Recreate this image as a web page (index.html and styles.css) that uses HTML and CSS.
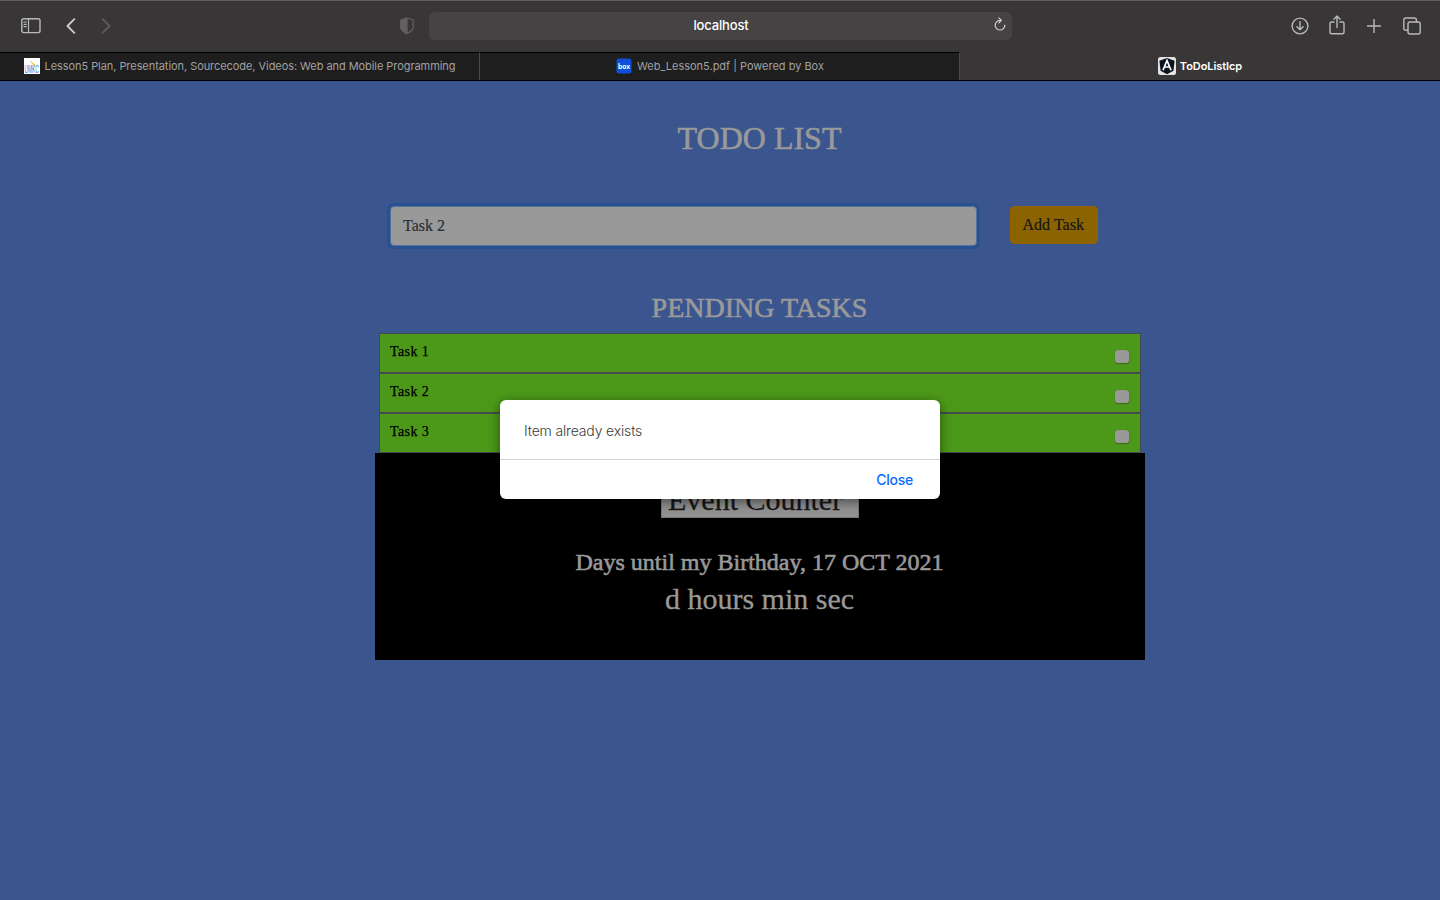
FILE: index.html
```html
<!DOCTYPE html>
<html lang="en">
<head>
<meta charset="utf-8">
<title>ToDoListIcp</title>
<link rel="stylesheet" href="styles.css">
</head>
<body>
<header class="toolbar">
  <div class="nav">
    <svg class="sidebar-icon" width="20" height="16" viewBox="0 0 20 16"><rect x=".8" y=".8" width="18.2" height="13.8" rx="1.8"/><path d="M7.5 1v13.5M3 4h2.3M3 6.3h2.3M3 8.6h2.3"/></svg>
    <svg class="back-icon" width="10" height="16" viewBox="0 0 10 16"><path d="M8.3 1.2 1.5 8l6.8 6.8"/></svg>
    <svg class="forward-icon" width="10" height="16" viewBox="0 0 10 16"><path d="M1.7 1.2 8.500 8l-6.800 6.800"/></svg>
  </div>
  <svg class="shield-icon" width="14" height="18" viewBox="0 0 14 18"><path class="outline" d="M7 1 13.200 3v7c0 3-3 5-6.200 6.600C3.800 15 .8 13 .8 10V3z"/><path class="half" d="M7 1v15.600C3.800 15 .8 13 .8 10V3z"/></svg>
  <div class="address">
    <span>localhost</span>
    <svg class="reload-icon" width="12" height="14" viewBox="0 0 12 14"><path d="M6.800 3.400H6A4.800 4.800 0 1 0 10.800 8.200M4.900.9l2.500 2.500-2.500 2.500"/></svg>
  </div>
  <div class="actions">
    <svg width="18" height="18" viewBox="0 0 18 18"><circle cx="9" cy="9" r="7.900"/><path d="M9 4.700v8M5.900 9.700 9 12.800l3.100-3.100"/></svg>
    <svg width="16" height="20" viewBox="0 0 16 20"><path d="M5 7H2.500Q1 7 1 8.500v8.700q0 1.500 1.500 1.500h11q1.500 0 1.500-1.500V8.500Q15 7 13.500 7H11M8 12.500V1.200M4.900 4.200 8 1.100l3.100 3.100"/></svg>
    <svg width="14" height="14" viewBox="0 0 14 14"><path d="M7 .5v13M.5 7h13"/></svg>
    <svg width="18" height="18" viewBox="0 0 18 18"><rect x="5" y="5" width="12.200" height="12" rx="2"/><path d="M5 13.200H2.800Q.8 13.200.8 11.200V3Q.8 1 2.800 1h8.600q2 0 2 2v2"/></svg>
  </div>
</header>
<nav class="tabs">
  <div class="tab">
    <svg width="16" height="16" viewBox="0 0 16 16"><rect width="16" height="16" fill="#fff"/><path d="m6 2 5 5v2L7.500 5z" fill="#f2c400"/><text transform="translate(.6 14.800) scale(.44 1)" class="umkc">UMKC</text></svg>
    <span class="tab-one">Lesson5 Plan, Presentation, Sourcecode, Videos: Web and Mobile Programming</span>
  </div>
  <div class="tab">
    <svg width="16" height="16" viewBox="0 0 16 16"><rect x=".5" y=".5" width="15" height="15" rx="2.500" fill="#0d4fd8"/><text x="2" y="10.500" textLength="12" lengthAdjust="spacingAndGlyphs" class="box">box</text></svg>
    <span class="tab-two">Web_Lesson5.pdf | Powered by Box</span>
  </div>
  <div class="tab active">
    <svg width="18" height="18" viewBox="0 0 18 18"><rect width="18" height="18" rx="2.500" fill="#e4e4e4"/><path d="m9 1 7.600 2.700-1.200 10L9 17.200l-6.400-3.500-1.200-10z" fill="#0b1220"/><path d="m5 13.300 4-9.800 4 9.800M6.600 10h4.800" fill="none" stroke="#fff" stroke-width="1.700"/></svg>
    <span class="tab-three">ToDoListIcp</span>
  </div>
</nav>
<main class="page">
  <section class="content">
    <h1 class="title">TODO LIST</h1>
    <form class="task-form">
      <input class="task-input" type="text" value="Task 2" aria-label="Task">
      <button class="add" type="button">Add Task</button>
    </form>
    <h2 class="pending">PENDING TASKS</h2>
    <ul class="tasks">
      <li><span>Task 1</span><i class="check"></i></li>
      <li><span>Task 2</span><i class="check"></i></li>
      <li><span>Task 3</span><i class="check"></i></li>
    </ul>
    <section class="counter">
      <div class="event">Event Counter</div>
      <h3 class="birthday">Days until my Birthday, 17 OCT 2021</h3>
      <p class="remaining">d hours min sec</p>
    </section>
  </section>
</main>
<div class="dialog" role="dialog">
  <p class="message">Item already exists</p>
  <div class="dialog-actions"><button class="close" type="button">Close</button></div>
</div>
</body>
</html>
```
FILE: styles.css
```css
* { box-sizing: border-box; }
body { margin: 0; height: 900px; overflow: hidden; background: #3b558f; font-family: "Liberation Serif", serif; }
h1, h2, h3, p, ul { margin: 0; padding: 0; font-weight: 400; }
svg { display: block; flex: none; }

.toolbar { height: 52px; padding-bottom: 2px; display: grid; grid-template-columns: 400px 29px 583px 1fr; align-items: center; background: #393637; border-top: 1px solid #5e5c5d; }
.toolbar svg { fill: none; stroke: #b9b8b8; stroke-width: 1.4; stroke-linecap: round; stroke-linejoin: round; }
.nav { display: flex; align-items: center; padding-left: 21px; }
.toolbar .back-icon { margin-left: 25px; stroke: #d0cfcf; stroke-width: 1.8; }
.toolbar .forward-icon { margin-left: 25px; stroke: #5e5c5d; stroke-width: 1.8; }
.toolbar .sidebar-icon path { stroke-width: 1.2; }
.toolbar .shield-icon { stroke: #626061; stroke-width: 1.2; }
.toolbar .shield-icon .half { fill: #626061; }
.address { height: 28px; border-radius: 6px; background: #464344; position: relative; display: flex; align-items: center; justify-content: center; padding: 0 0 2px 1px; color: #fff; font: 500 13px Inter, sans-serif; letter-spacing: -.15px; margin-top: 1px; }
.toolbar .reload-icon { position: absolute; right: 6px; top: 5px; stroke: #d0cfcf; stroke-width: 1.2; }
.actions { display: flex; align-items: center; padding-left: 279px; }
.actions svg + svg { margin-left: 20px; }
.actions svg:nth-child(2) { margin-top: -2px; }
.actions svg:nth-child(3) { margin-left: 22px; }
.actions svg:nth-child(4) { margin-left: 22px; }

.tabs { height: 29px; display: grid; grid-template-columns: repeat(3, 480px); background: #393637; border-bottom: 1px solid #000; }
.tab { display: flex; align-items: center; justify-content: center; gap: 5px; padding-bottom: 1px; background: #1e1e1e; border-top: 1px solid #000; border-right: 1px solid #4a4849; color: #a1a1a1; font: 400 11px Inter, sans-serif; white-space: nowrap; }
.tab.active { background: #393637; border-color: transparent; color: #fff; font-weight: 600; gap: 4px; padding-left: 1px; letter-spacing: -.07px; }
.tab-one { letter-spacing: -.06px; }
.tab-two { letter-spacing: -.01px; }
.tab:nth-child(2) { padding-left: 1px; }
.umkc { font: 400 11px "Liberation Sans", sans-serif; fill: #3478d4; }
.box { font: 700 7px Inter, sans-serif; fill: #fff; }

.page { padding-left: 375px; }
.content { width: 770px; display: flex; flex-direction: column; color: #999; }
.title { margin-top: 38px; padding-right: 1px; text-align: center; font-size: 32px; line-height: 38px; -webkit-text-stroke: .6px #999; }
.task-form { display: flex; align-items: flex-start; gap: 33px; margin-top: 49px; padding-left: 15px; }
.task-input { width: 587px; height: 40px; padding: 0 12px; border: 1px solid #4d7399; border-radius: 4px; outline: none; background: #999; color: #2c3035; font: 16px "Liberation Serif", serif; -webkit-text-stroke: .2px #2c3035; box-shadow: 0 0 0 3px #2b5092; }
.add { width: 87.500px; height: 38px; padding: 0 1px 0 0; border: 1px solid #926300; border-radius: 4px; background: #8b6300; color: #141619; font: 16px "Liberation Serif", serif; letter-spacing: .05px; -webkit-text-stroke: .2px #141619; }
.pending { margin-top: 45px; padding-right: 1px; text-align: center; font-size: 28px; line-height: 34px; -webkit-text-stroke: .6px #999; }
.tasks { margin: 8px 4px 0; list-style: none; }
.tasks li { height: 40px; display: flex; justify-content: space-between; padding: 9px 11px 0 10px; background: #4c9919; border: 1px solid #464a50; color: #000; font-size: 14px; line-height: 17px; letter-spacing: .4px; -webkit-text-stroke: .25px #000; }
.check { width: 14px; height: 13px; margin-top: 7px; border-radius: 3px; background: #999; box-shadow: 0 0 1px #355f20, 0 1px 1px #396b21; }
.counter { height: 207px; padding-top: 26px; display: flex; flex-direction: column; align-items: center; background: #000; }
.event { width: 198px; height: 39px; padding-left: 6px; border: 1px solid #777; background: #939393; color: #181818; font-size: 30px; line-height: 39px; -webkit-text-stroke: .3px #181818; }
.birthday { margin-top: 30px; padding-right: 1px; font-size: 24px; line-height: 29px; -webkit-text-stroke: .6px #999; }
.remaining { margin-top: 4px; padding-right: 1px; font-size: 30px; line-height: 36px; -webkit-text-stroke: .3px #999; }

.dialog { position: absolute; left: 500px; top: 400px; width: 440px; height: 99px; overflow: hidden; border-radius: 6px; background: #fff; font-family: Inter, sans-serif; box-shadow: 0 3px 12px rgba(0,0,0,.5); }
.message { height: 60px; padding: 21px 24px; border-bottom: 1px solid #d2d2d2; color: #3b3b3b; font-size: 14px; line-height: 20px; font-weight: 300; letter-spacing: -.16px; }
.dialog-actions { display: flex; justify-content: flex-end; padding: 10px 27px; }
.close { border: 0; padding: 0; background: none; color: #076bff; font: 500 14px/20px Inter, sans-serif; letter-spacing: -.25px; }
```
